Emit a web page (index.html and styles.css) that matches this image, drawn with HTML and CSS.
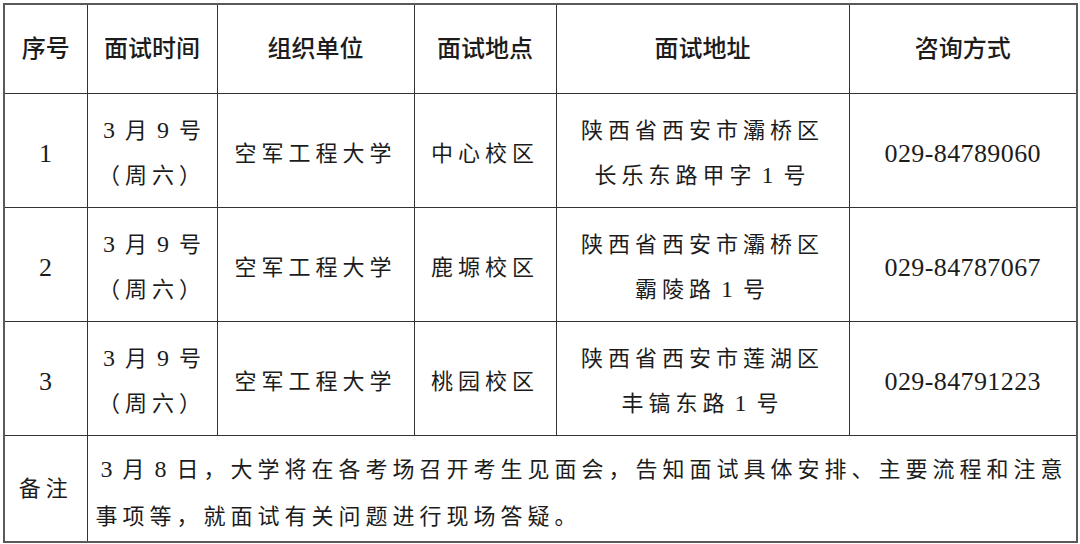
FILE: index.html
```html
<!DOCTYPE html>
<html lang="zh-CN">
<head>
<meta charset="utf-8">
<title>面试安排</title>
<link rel="stylesheet" href="styles.css">
</head>
<body>
<table class="schedule">
  <colgroup>
    <col class="c-no">
    <col class="c-time">
    <col class="c-org">
    <col class="c-site">
    <col class="c-addr">
    <col class="c-tel">
  </colgroup>
  <thead>
    <tr class="head-row">
      <th>序号</th>
      <th>面试时间</th>
      <th>组织单位</th>
      <th>面试地点</th>
      <th>面试地址</th>
      <th>咨询方式</th>
    </tr>
  </thead>
  <tbody>
    <tr class="data-row">
      <td class="num">1</td>
      <td class="cjk"><span class="d">3</span>月<span class="d">9</span>号<br>（周六）</td>
      <td class="cjk">空军工程大学</td>
      <td class="cjk">中心校区</td>
      <td class="cjk">陕西省西安市灞桥区<br>长乐东路甲字<span class="d">1</span>号</td>
      <td class="num">029-84789060</td>
    </tr>
    <tr class="data-row">
      <td class="num">2</td>
      <td class="cjk"><span class="d">3</span>月<span class="d">9</span>号<br>（周六）</td>
      <td class="cjk">空军工程大学</td>
      <td class="cjk">鹿塬校区</td>
      <td class="cjk">陕西省西安市灞桥区<br>霸陵路<span class="d">1</span>号</td>
      <td class="num">029-84787067</td>
    </tr>
    <tr class="data-row">
      <td class="num">3</td>
      <td class="cjk"><span class="d">3</span>月<span class="d">9</span>号<br>（周六）</td>
      <td class="cjk">空军工程大学</td>
      <td class="cjk">桃园校区</td>
      <td class="cjk">陕西省西安市莲湖区<br>丰镐东路<span class="d">1</span>号</td>
      <td class="num">029-84791223</td>
    </tr>
    <tr class="note-row">
      <td class="cjk note-label">备注</td>
      <td class="cjk note-text" colspan="5"><span class="d">3</span>月<span class="d">8</span>日，大学将在各考场召开考生见面会，告知面试具体安排、主要流程和注意<br>事项等，就面试有关问题进行现场答疑。</td>
    </tr>
  </tbody>
</table>
</body>
</html>
```

FILE: styles.css
```css
html, body {
  margin: 0;
  padding: 0;
  background: #ffffff;
}

body {
  padding: 3px 0 0 3px;
  color: #1c1c1c;
  font-family: "Liberation Serif", "Noto Sans CJK SC", serif;
}

.schedule {
  border-collapse: collapse;
  table-layout: fixed;
  width: 1073px;
  border: 2px solid #5a5a5a;
}

.c-no { width: 83px; }
.c-time { width: 130px; }
.c-org { width: 197px; }
.c-site { width: 142px; }
.c-addr { width: 293px; }
.c-tel { width: 228px; }

.schedule th,
.schedule td {
  border: 1px solid #333333;
  padding: 0;
  text-align: center;
  vertical-align: middle;
}

.head-row { height: 89px; }
.head-row th {
  font-family: "Noto Sans CJK SC", sans-serif;
  font-weight: 500;
  font-size: 24px;
  line-height: 30px;
  padding-bottom: 4px;
}

.data-row { height: 114px; }

.cjk {
  font-family: "Liberation Serif", "Noto Sans CJK SC", serif;
  font-size: 22px;
  font-weight: 400;
  line-height: 45px;
  letter-spacing: 5px;
  padding-left: 5px;
  white-space: nowrap;
}

.d {
  font-family: "Liberation Serif", serif;
  font-size: 24px;
  margin: 0 5px;
}

.num {
  font-family: "Liberation Serif", serif;
  font-size: 26px;
  letter-spacing: 0.4px;
}

.data-row .cjk {
  padding-top: 6px;
}

.data-row .num {
  padding-top: 8px;
}

.note-row { height: 107px; }
.note-row .note-label {
  padding-left: 0;
  padding-top: 0;
}
.note-row .note-text {
  text-align: left;
  line-height: 47px;
  padding: 10px 0 0 8px;
}
```
